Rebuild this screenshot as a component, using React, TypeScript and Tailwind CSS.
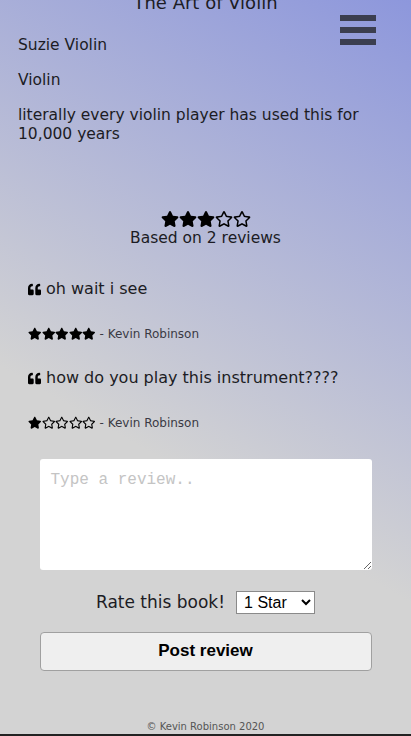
import { FaStar, FaRegStar, FaQuoteLeft } from "react-icons/fa";

const reviews = [
  { text: "oh wait i see", rating: 5, author: "Kevin Robinson" },
  { text: "how do you play this instrument????", rating: 1, author: "Kevin Robinson" },
];

function Stars({ rating, size }: { rating: number; size: number }) {
  return (
    <span className="inline-flex items-center text-black">
      {[1, 2, 3, 4, 5].map((i) =>
        i <= rating ? <FaStar key={i} size={size} /> : <FaRegStar key={i} size={size} />
      )}
    </span>
  );
}

export default function App() {
  return (
    <div
      className="min-h-[736px] flex flex-col text-[#1c1c24] bg-[linear-gradient(30deg,#d3d3d3_38%,#8d97dc_100%)]"
      style={{ fontFamily: '"DejaVu Sans", sans-serif' }}
    >
      <header className="relative px-[18px]">
        <h1 className="text-center text-[18px] leading-[22px] -mt-[8px]">The Art of Violin</h1>
        <button className="absolute right-[35px] top-[15px] flex flex-col gap-[6px]" aria-label="menu">
          <span className="block w-[36px] h-[6px] bg-[#3b3e4f]" />
          <span className="block w-[36px] h-[6px] bg-[#3b3e4f]" />
          <span className="block w-[36px] h-[6px] bg-[#3b3e4f]" />
        </button>
        <p className="mt-[20px] text-[15.5px] leading-[22px]">Suzie Violin</p>
        <p className="mt-[13px] text-[15.5px] leading-[22px]">Violin</p>
        <p className="mt-[15px] text-[15.5px] leading-[19px]">
          literally every violin player has used this for 10,000 years
        </p>
      </header>

      <section className="mt-[66px] flex flex-col items-center">
        <Stars rating={3} size={18} />
        <p className="text-[15.5px] leading-[20px]">Based on 2 reviews</p>
      </section>

      <section className="mt-[30px] px-[28px]">
        {reviews.map((r, idx) => (
          <div key={idx} className="mb-[25px]">
            <p className="flex items-center gap-[5px] text-[16px] leading-[22px]">
              <FaQuoteLeft size={13} className="text-black" />
              <span>{r.text}</span>
            </p>
            <div className="mt-[26px] flex items-center gap-[4px] text-[12px] leading-[16px] text-[#3a3a44]">
              <Stars rating={r.rating} size={13.5} />
              <span>- {r.author}</span>
            </div>
          </div>
        ))}
      </section>

      <section className="mt-[3px] flex flex-col items-center">
        <textarea
          placeholder="Type a review.."
          className="w-[332px] h-[111px] bg-white rounded-[3px] px-[11px] py-[9px] text-[16px] placeholder:text-[#c4c4c4] outline-none"
          style={{ fontFamily: '"Liberation Mono", monospace' }}
        />
        <div className="mt-[20px] flex items-center gap-[11px]">
          <span className="text-[17px]">Rate this book!</span>
          <select
            className="w-[79px] h-[23px] bg-white border border-[#8a8a8a] text-[16px] text-black px-[3px]"
            style={{ fontFamily: '"Liberation Sans", Arial, sans-serif' }}
            defaultValue="1"
          >
            <option value="1">1 Star</option>
            <option value="2">2 Stars</option>
            <option value="3">3 Stars</option>
            <option value="4">4 Stars</option>
            <option value="5">5 Stars</option>
          </select>
        </div>
        <button
          className="mt-[16px] w-[332px] h-[39px] bg-[#efefef] border border-[#a0a0a0] rounded-[4px] text-[17px] font-bold text-black"
          style={{ fontFamily: '"Liberation Sans", Arial, sans-serif' }}
        >
          Post review
        </button>
      </section>

      <footer className="mt-auto flex flex-col items-center">
        <p className="text-[10px] leading-[12px] text-[#555] mb-[1px]">© Kevin Robinson 2020</p>
        <div className="w-full h-[2px] bg-[#222]" />
      </footer>
    </div>
  );
}
